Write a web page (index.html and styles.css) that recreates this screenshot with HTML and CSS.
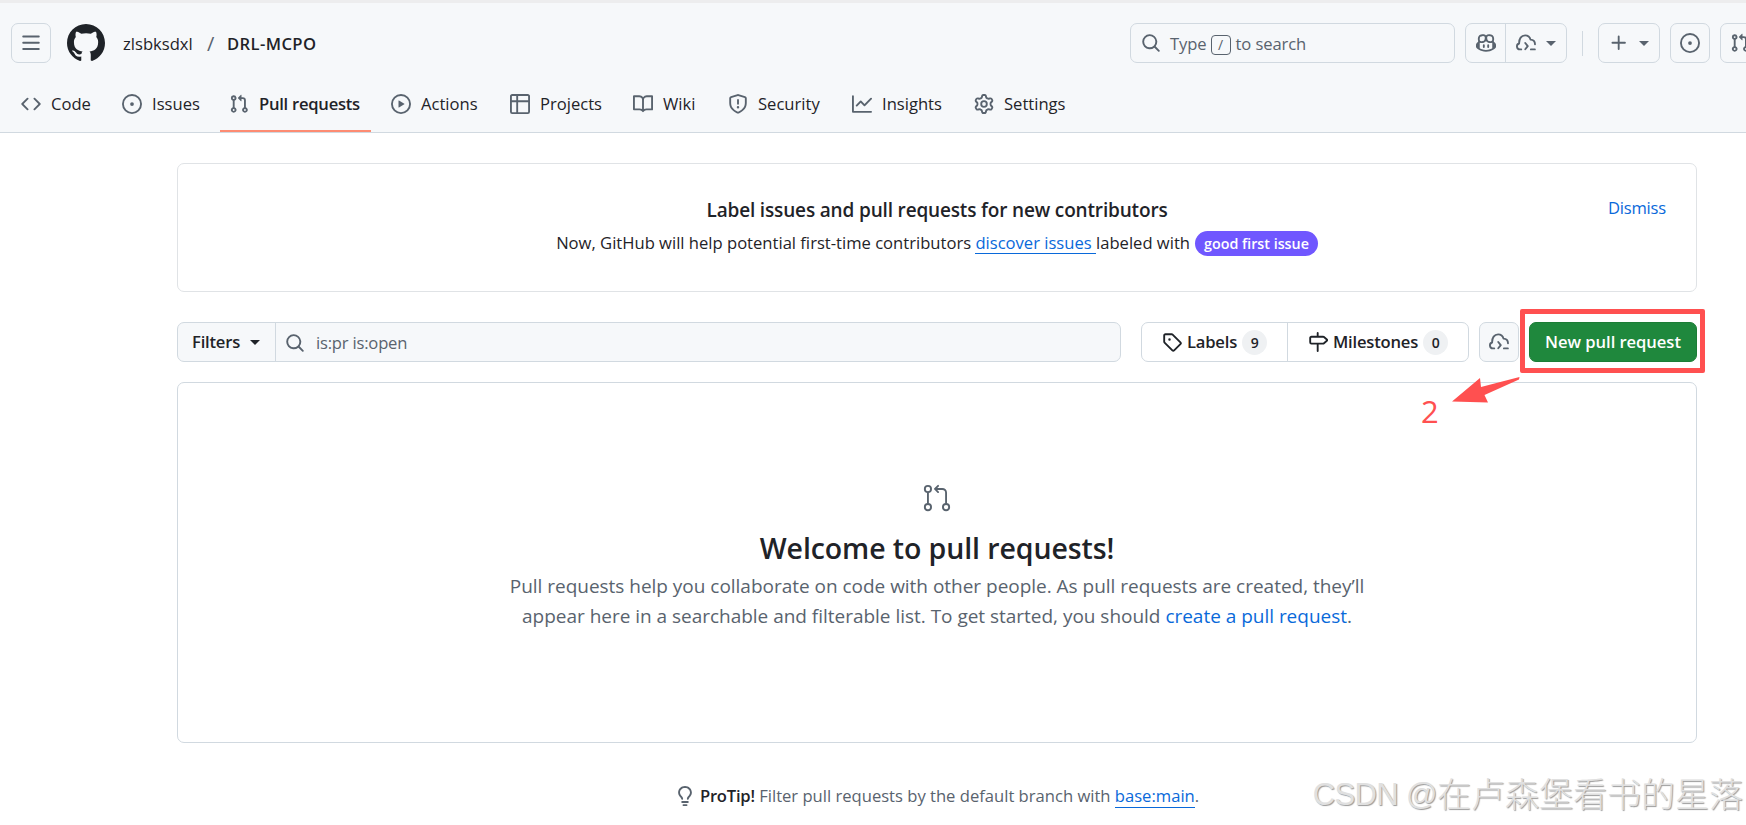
FILE: index.html
```html
<!DOCTYPE html>
<html lang="en">
<head>
  <meta charset="UTF-8" />
  <meta name="viewport" content="width=device-width, initial-scale=1.0"/>
  <title>Pull requests · zlsbksdxl/DRL-MCPO</title>
  <link rel="stylesheet" href="styles.css">
</head>
<body>
  <!-- shared icons -->
  <svg class="sprite" aria-hidden="true">
    <symbol id="i-pr" viewBox="0 0 16 16"><path d="M1.5 3.25a2.25 2.25 0 1 1 3 2.122v5.256a2.251 2.251 0 1 1-1.5 0V5.372A2.25 2.25 0 0 1 1.5 3.25Zm5.677-.177L9.573.677A.25.25 0 0 1 10 .854V2.5h1A2.5 2.5 0 0 1 13.5 5v5.628a2.251 2.251 0 1 1-1.5 0V5a1 1 0 0 0-1-1h-1v1.646a.25.25 0 0 1-.427.177L7.177 3.427a.25.25 0 0 1 0-.354ZM3.75 2.5a.75.75 0 1 0 0 1.5.75.75 0 0 0 0-1.5Zm0 9.5a.75.75 0 1 0 0 1.5.75.75 0 0 0 0-1.5Zm8.25.75a.75.75 0 1 0 1.5 0 .75.75 0 0 0-1.5 0Z"/></symbol>
    <symbol id="i-issue" viewBox="0 0 16 16"><path d="M8 9.5a1.5 1.5 0 1 0 0-3 1.5 1.5 0 0 0 0 3Z"/><path d="M8 0a8 8 0 1 1 0 16A8 8 0 0 1 8 0ZM1.5 8a6.5 6.5 0 1 0 13 0 6.5 6.5 0 0 0-13 0Z"/></symbol>
    <symbol id="i-search" viewBox="0 0 16 16"><path d="M10.68 11.74a6 6 0 0 1-7.922-8.982 6 6 0 0 1 8.982 7.922l3.04 3.04a.749.749 0 0 1-.326 1.275.749.749 0 0 1-.734-.215ZM11.5 7a4.499 4.499 0 1 0-8.997 0A4.499 4.499 0 0 0 11.5 7Z"/></symbol>
    <symbol id="i-cloud" viewBox="0 0 16 16"><path d="M4.2 13.100H3.100a2.400 2.400 0 0 1-.600-4.700C2.400 4.600 4.200 1.900 7.300 1.900c2.300 0 3.800 1.400 4.300 3.400 2.200.100 3.600 1.500 3.600 3.700M7.400 8l2 2.500-2 2.500M11.900 13.100h3.200" fill="none" stroke="currentColor" stroke-width="1.5" stroke-linecap="round" stroke-linejoin="round"/></symbol>
  </svg>

  <header class="header">
    <div class="topbar">
      <div class="icon-btn"><svg class="icon" viewBox="0 0 16 16"><path d="M1 2.75A.75.75 0 0 1 1.75 2h12.5a.75.75 0 0 1 0 1.5H1.75A.75.75 0 0 1 1 2.75Zm0 5A.75.75 0 0 1 1.75 7h12.5a.75.75 0 0 1 0 1.5H1.75A.75.75 0 0 1 1 7.75ZM1.75 12h12.5a.75.75 0 0 1 0 1.5H1.75a.75.75 0 0 1 0-1.5Z"/></svg></div>
      <svg class="logo" viewBox="0 0 16 16"><path d="M8 0c4.42 0 8 3.58 8 8a8.013 8.013 0 0 1-5.45 7.59c-.4.08-.55-.17-.55-.38 0-.27.01-1.13.01-2.2 0-.75-.25-1.23-.54-1.48 1.78-.2 3.65-.88 3.65-3.95 0-.88-.31-1.59-.82-2.15.08-.2.36-1.02-.08-2.12 0 0-.67-.22-2.2.82-.64-.18-1.32-.27-2-.27-.68 0-1.36.09-2 .27-1.53-1.03-2.2-.82-2.2-.82-.44 1.1-.16 1.92-.08 2.12-.51.56-.82 1.28-.82 2.15 0 3.06 1.86 3.75 3.64 3.95-.23.2-.44.55-.51 1.07-.46.21-1.61.55-2.33-.66-.15-.24-.6-.83-1.23-.82-.67.01-.27.38.01.53.34.19.73.9.82 1.13.16.45.68 1.31 2.69.94 0 .67.01 1.3.01 1.49 0 .21-.15.45-.55.38A7.995 7.995 0 0 1 0 8c0-4.42 3.58-8 8-8Z"/></svg>
      <div class="crumbs"><span class="owner">zlsbksdxl</span><span class="slash">/</span><b class="repo">DRL-MCPO</b></div>
      <div class="search"><svg class="icon"><use href="#i-search"/></svg><span>Type</span><kbd>/</kbd><span>to search</span></div>
      <div class="btn-group">
        <div class="copilot"><svg class="icon" viewBox="0 0 16 16"><path d="M7.998 15.035c-4.562 0-7.873-2.914-7.998-3.749V9.338c.085-.628.677-1.686 1.588-2.065.013-.07.024-.143.036-.218.029-.183.06-.384.126-.612-.201-.508-.254-1.084-.254-1.656 0-.87.128-1.769.693-2.484.579-.733 1.494-1.124 2.724-1.261 1.206-.134 2.262.034 2.944.765.05.053.096.108.139.165.044-.057.094-.112.143-.165.682-.731 1.738-.899 2.944-.765 1.23.137 2.145.528 2.724 1.261.566.715.693 1.614.693 2.484 0 .572-.053 1.148-.254 1.656.066.228.098.429.126.612.012.076.024.148.037.218.924.385 1.522 1.471 1.591 2.095v1.872c0 .766-3.351 3.795-8.002 3.795Zm0-1.485c2.28 0 4.584-1.11 5.002-1.433V7.862l-.023-.116c-.49.21-1.075.291-1.727.291-1.146 0-2.059-.327-2.71-.991A3.222 3.222 0 0 1 8 6.303a3.24 3.24 0 0 1-.544.743c-.65.664-1.563.991-2.71.991-.652 0-1.236-.081-1.727-.291l-.023.116v4.255c.419.323 2.722 1.433 5.002 1.433ZM6.762 2.83c-.193-.206-.637-.413-1.682-.297-1.019.113-1.479.404-1.713.7-.247.312-.369.789-.369 1.554 0 .793.129 1.171.308 1.371.162.181.519.379 1.442.379.853 0 1.339-.235 1.638-.54.315-.322.527-.827.617-1.553.117-.935-.037-1.395-.241-1.614Zm4.155-.297c-1.044-.116-1.488.091-1.681.297-.204.219-.359.679-.242 1.614.091.726.303 1.231.618 1.553.299.305.784.54 1.638.54.922 0 1.28-.198 1.442-.379.179-.2.308-.578.308-1.371 0-.765-.123-1.242-.37-1.554-.233-.296-.693-.587-1.713-.7Z"/><path d="M6.25 9.037a.75.75 0 0 1 .75.75v1.501a.75.75 0 0 1-1.5 0V9.787a.75.75 0 0 1 .75-.75Zm4.25.75v1.501a.75.75 0 0 1-1.5 0V9.787a.75.75 0 0 1 1.5 0Z"/></svg></div>
        <div class="agents"><svg class="icon"><use href="#i-cloud"/></svg><i class="caret"></i></div>
      </div>
      <div class="divider"></div>
      <div class="icon-btn create"><svg class="icon" viewBox="0 0 16 16"><path d="M7.75 2a.75.75 0 0 1 .75.75V7h4.25a.75.75 0 0 1 0 1.5H8.5v4.25a.75.75 0 0 1-1.5 0V8.5H2.75a.75.75 0 0 1 0-1.5H7V2.75A.75.75 0 0 1 7.75 2Z"/></svg><i class="caret"></i></div>
      <div class="icon-btn"><svg class="icon"><use href="#i-issue"/></svg></div>
      <div class="icon-btn last"><svg class="icon"><use href="#i-pr"/></svg></div>
    </div>

    <nav class="tabs">
      <a class="tab code"><svg class="icon" viewBox="0 0 16 16"><path d="m11.28 3.22 4.25 4.25a.75.75 0 0 1 0 1.06l-4.25 4.25a.749.749 0 0 1-1.275-.326.749.749 0 0 1 .215-.734L13.94 8l-3.72-3.72a.749.749 0 0 1 .326-1.275.749.749 0 0 1 .734.215Zm-6.56 0a.751.751 0 0 1 1.042.018.751.751 0 0 1 .018 1.042L2.06 8l3.72 3.72a.749.749 0 0 1-.326 1.275.749.749 0 0 1-.734-.215L.47 8.53a.75.75 0 0 1 0-1.06Z"/></svg>Code</a>
      <a class="tab issues"><svg class="icon"><use href="#i-issue"/></svg>Issues</a>
      <a class="tab pulls selected"><svg class="icon"><use href="#i-pr"/></svg>Pull requests</a>
      <a class="tab actions"><svg class="icon" viewBox="0 0 16 16"><path d="M8 0a8 8 0 1 1 0 16A8 8 0 0 1 8 0ZM1.5 8a6.5 6.5 0 1 0 13 0 6.5 6.5 0 0 0-13 0Zm4.879-2.773 4.264 2.559a.25.25 0 0 1 0 .428l-4.264 2.559A.25.25 0 0 1 6 10.559V5.442a.25.25 0 0 1 .379-.215Z"/></svg>Actions</a>
      <a class="tab projects"><svg class="icon" viewBox="0 0 16 16"><path d="M0 1.75C0 .784.784 0 1.75 0h12.5C15.216 0 16 .784 16 1.75v12.5A1.75 1.75 0 0 1 14.25 16H1.75A1.75 1.75 0 0 1 0 14.25ZM6.5 6.5v8h7.75a.25.25 0 0 0 .25-.25V6.5Zm8-1.5V1.75a.25.25 0 0 0-.25-.25H6.5V5Zm-13 1.5v7.75c0 .138.112.25.25.25H5v-8ZM5 5V1.5H1.75a.25.25 0 0 0-.25.25V5Z"/></svg>Projects</a>
      <a class="tab wiki"><svg class="icon" viewBox="0 0 16 16"><path d="M0 1.75A.75.75 0 0 1 .75 1h4.253c1.227 0 2.317.59 3 1.501A3.743 3.743 0 0 1 11.006 1h4.245a.75.75 0 0 1 .75.75v10.5a.75.75 0 0 1-.75.75h-4.507a2.25 2.25 0 0 0-1.591.659l-.622.621a.75.75 0 0 1-1.06 0l-.622-.621A2.25 2.25 0 0 0 5.258 13H.75a.75.75 0 0 1-.75-.75Zm7.251 10.324.004-5.073-.002-2.253A2.25 2.25 0 0 0 5.003 2.5H1.5v9h3.757a3.75 3.75 0 0 1 1.994.574ZM8.755 4.75l-.004 7.322a3.752 3.752 0 0 1 1.992-.572H14.5v-9h-3.495a2.25 2.25 0 0 0-2.25 2.25Z"/></svg>Wiki</a>
      <a class="tab security"><svg class="icon" viewBox="0 0 16 16"><path d="M7.467.133a1.748 1.748 0 0 1 1.066 0l5.25 1.68A1.75 1.75 0 0 1 15 3.48V7c0 1.566-.32 3.182-1.303 4.682-.983 1.498-2.585 2.813-5.032 3.855a1.697 1.697 0 0 1-1.33 0c-2.447-1.042-4.049-2.357-5.032-3.855C1.32 10.182 1 8.566 1 7V3.48a1.75 1.75 0 0 1 1.217-1.667Zm.61 1.429a.25.25 0 0 0-.153 0l-5.25 1.68a.25.25 0 0 0-.174.238V7c0 1.358.275 2.666 1.057 3.86.784 1.194 2.121 2.34 4.366 3.297a.196.196 0 0 0 .154 0c2.245-.956 3.582-2.104 4.366-3.298C13.225 9.666 13.5 8.36 13.5 7V3.48a.251.251 0 0 0-.174-.237l-5.25-1.68ZM8.75 4.75v3a.75.75 0 0 1-1.5 0v-3a.75.75 0 0 1 1.5 0ZM9 10.5a1 1 0 1 1-2 0 1 1 0 0 1 2 0Z"/></svg>Security</a>
      <a class="tab insights"><svg class="icon" viewBox="0 0 16 16"><path d="M1.5 1.75V13.5h13.75a.75.75 0 0 1 0 1.5H.75a.75.75 0 0 1-.75-.75V1.75a.75.75 0 0 1 1.5 0Zm14.28 2.53-5.25 5.25a.75.75 0 0 1-1.06 0L7 7.06 4.28 9.78a.751.751 0 0 1-1.042-.018.751.751 0 0 1-.018-1.042l3.25-3.25a.75.75 0 0 1 1.06 0L10 7.94l4.72-4.72a.751.751 0 0 1 1.042.018.751.751 0 0 1 .018 1.042Z"/></svg>Insights</a>
      <a class="tab settings"><svg class="icon" viewBox="0 0 16 16"><path d="M8 0a8.2 8.2 0 0 1 .701.031C9.444.095 9.99.645 10.16 1.29l.288 1.107c.018.066.079.158.212.224.231.114.454.243.668.386.123.082.233.09.299.071l1.103-.303c.644-.176 1.392.021 1.82.63.27.385.506.792.704 1.218.315.675.111 1.422-.364 1.891l-.814.806c-.049.048-.098.147-.088.294.016.257.016.515 0 .772-.01.147.038.246.088.294l.814.806c.475.469.679 1.216.364 1.891a7.977 7.977 0 0 1-.704 1.217c-.428.61-1.176.807-1.82.63l-1.102-.302c-.067-.019-.177-.011-.3.071a5.909 5.909 0 0 1-.668.386c-.133.066-.194.158-.211.224l-.29 1.106c-.168.646-.715 1.196-1.458 1.26a8.006 8.006 0 0 1-1.402 0c-.743-.064-1.289-.614-1.458-1.26l-.289-1.106c-.018-.066-.079-.158-.212-.224a5.738 5.738 0 0 1-.668-.386c-.123-.082-.233-.09-.299-.071l-1.103.303c-.644.176-1.392-.021-1.82-.63a8.12 8.12 0 0 1-.704-1.218c-.315-.675-.111-1.422.363-1.891l.815-.806c.05-.048.098-.147.088-.294a6.214 6.214 0 0 1 0-.772c.01-.147-.038-.246-.088-.294l-.815-.806C.635 6.045.431 5.298.746 4.623a7.92 7.92 0 0 1 .704-1.217c.428-.61 1.176-.807 1.82-.63l1.102.302c.067.019.177.011.3-.071.214-.143.437-.272.668-.386.133-.066.194-.158.211-.224l.29-1.106C6.009.645 6.556.095 7.299.03 7.53.01 7.764 0 8 0Zm-.571 1.525c-.036.003-.108.036-.137.146l-.289 1.105c-.147.561-.549.967-.998 1.189-.173.086-.34.183-.5.29-.417.278-.97.423-1.529.27l-1.103-.303c-.109-.03-.175.016-.195.045-.22.312-.412.644-.573.99-.014.031-.021.11.059.19l.815.806c.411.406.562.957.53 1.456a4.709 4.709 0 0 0 0 .582c.032.499-.119 1.05-.53 1.456l-.815.806c-.081.08-.073.159-.059.19.162.346.353.677.573.989.02.03.085.076.195.046l1.102-.303c.56-.153 1.113-.008 1.53.27.161.107.328.204.501.29.447.222.85.629.997 1.189l.289 1.105c.029.109.101.143.137.146a6.6 6.6 0 0 0 1.142 0c.036-.003.108-.036.137-.146l.289-1.105c.147-.561.549-.967.998-1.189.173-.086.34-.183.5-.29.417-.278.97-.423 1.529-.27l1.103.303c.109.029.175-.016.195-.045.22-.313.411-.644.573-.99.014-.031.021-.11-.059-.19l-.815-.806c-.411-.406-.562-.957-.53-1.456a4.709 4.709 0 0 0 0-.582c-.032-.499.119-1.05.53-1.456l.815-.806c.081-.08.073-.159.059-.19a6.464 6.464 0 0 0-.573-.989c-.02-.03-.085-.076-.195-.046l-1.102.303c-.56.153-1.113.008-1.53-.27a4.44 4.44 0 0 0-.501-.29c-.447-.222-.85-.629-.997-1.189l-.289-1.105c-.029-.11-.101-.143-.137-.146a6.6 6.6 0 0 0-1.142 0ZM11 8a3 3 0 1 1-6 0 3 3 0 0 1 6 0ZM9.5 8a1.5 1.5 0 1 0-3.001.001A1.5 1.5 0 0 0 9.5 8Z"/></svg>Settings</a>
    </nav>
  </header>

  <main class="container">
    <section class="banner">
      <h4>Label issues and pull requests for new contributors</h4>
      <p>Now, GitHub will help potential first-time contributors <a class="link underlined">discover issues&nbsp;</a><span class="labeled">labeled with</span><span class="pill">good first issue</span></p>
      <a class="link dismiss">Dismiss</a>
    </section>

    <div class="filter-row">
      <div class="filters">
        <div class="filters-btn">Filters<i class="caret"></i></div>
        <div class="query"><svg class="icon"><use href="#i-search"/></svg>is:pr is:open</div>
      </div>
      <div class="subnav">
        <div class="labels"><svg class="icon" viewBox="0 0 16 16"><path d="M1 7.775V2.75C1 1.784 1.784 1 2.75 1h5.025c.464 0 .91.184 1.238.513l6.25 6.25a1.75 1.75 0 0 1 0 2.474l-5.026 5.026a1.75 1.75 0 0 1-2.474 0l-6.25-6.25A1.752 1.752 0 0 1 1 7.775Zm1.5 0c0 .066.026.13.073.177l6.25 6.25a.25.25 0 0 0 .354 0l5.025-5.025a.25.25 0 0 0 0-.354l-6.25-6.25a.25.25 0 0 0-.177-.073H2.75a.25.25 0 0 0-.25.25ZM6 5a1 1 0 1 1 0 2 1 1 0 0 1 0-2Z"/></svg><span>Labels</span><em>9</em></div>
        <div class="milestones"><svg class="icon" viewBox="0 0 16 16"><path d="M7.75 0a.75.75 0 0 1 .75.75V3h3.634c.414 0 .814.147 1.13.414l2.07 1.75a1.75 1.75 0 0 1 0 2.672l-2.07 1.75a1.75 1.75 0 0 1-1.13.414H8.5v5.25a.75.75 0 0 1-1.5 0V10H2.75A1.75 1.75 0 0 1 1 8.25v-3.5C1 3.784 1.784 3 2.75 3H7V.75A.75.75 0 0 1 7.75 0Zm4.384 8.5a.25.25 0 0 0 .161-.06l2.07-1.75a.248.248 0 0 0 0-.38l-2.07-1.75a.25.25 0 0 0-.161-.06H2.75a.25.25 0 0 0-.25.25v3.5c0 .138.112.25.25.25h9.384Z"/></svg><span>Milestones</span><em>0</em></div>
      </div>
      <div class="icon-btn cloud-btn"><svg class="icon"><use href="#i-cloud"/></svg></div>
      <div class="new-pr">New pull request
        <!-- highlight drawn over the button -->
        <div class="mark-box"></div>
        <svg class="mark-arrow" viewBox="0 0 68 28"><path d="M67.500 0 67 2.500 32.500 18 36 25.500 0 24.500 28 1 29 10Z"/></svg>
        <span class="mark-number">2</span>
      </div>
    </div>

    <section class="blankslate">
      <svg class="icon big" viewBox="0 0 24 24"><path d="M16 19.25a3.25 3.25 0 1 1 6.5 0 3.25 3.25 0 0 1-6.5 0Zm-14.5 0a3.25 3.25 0 1 1 6.5 0 3.25 3.25 0 0 1-6.5 0Zm0-14.5a3.25 3.25 0 1 1 6.5 0 3.25 3.25 0 0 1-6.5 0ZM4.75 3a1.75 1.75 0 1 0 .001 3.501A1.75 1.75 0 0 0 4.75 3Zm0 14.5a1.75 1.75 0 1 0 .001 3.501A1.75 1.75 0 0 0 4.75 17.5Zm14.5 0a1.75 1.75 0 1 0 .001 3.501 1.75 1.75 0 0 0-.001-3.501Z"/><path d="M13.405 1.72a.75.75 0 0 1 0 1.06L12.185 4h4.065A3.75 3.75 0 0 1 20 7.75v8.75a.75.75 0 0 1-1.5 0V7.75a2.25 2.25 0 0 0-2.25-2.25h-4.064l1.22 1.22a.75.75 0 0 1-1.061 1.06l-2.5-2.5a.75.75 0 0 1 0-1.06l2.5-2.5a.75.75 0 0 1 1.06 0ZM4.75 7.25A.75.75 0 0 1 5.5 8v8A.75.75 0 0 1 4 16V8a.75.75 0 0 1 .75-.75Z"/></svg>
      <h3>Welcome to pull requests!</h3>
      <p>Pull requests help you collaborate on code with other people. As pull requests are created, they’ll<br>appear here in a searchable and filterable list. To get started, you should <a class="link">create a pull request</a>.</p>
    </section>

    <div class="protip">
      <svg class="icon" viewBox="0 0 16 16"><path d="M8 1.5c-2.363 0-4 1.69-4 3.75 0 .984.424 1.625.984 2.304l.214.253c.223.264.47.556.673.848.284.411.537.896.621 1.49a.75.75 0 0 1-1.484.211c-.04-.282-.163-.547-.37-.847a8.456 8.456 0 0 0-.542-.68c-.084-.1-.173-.205-.268-.32C3.201 7.75 2.5 6.766 2.5 5.25 2.5 2.31 4.863 0 8 0s5.5 2.31 5.5 5.25c0 1.516-.701 2.5-1.328 3.259-.095.115-.184.22-.268.319-.207.245-.383.453-.541.681-.208.3-.33.565-.37.847a.751.751 0 0 1-1.485-.212c.084-.593.337-1.078.621-1.489.203-.292.45-.584.673-.848.075-.088.147-.173.213-.253.561-.679.985-1.32.985-2.304 0-2.06-1.637-3.75-4-3.75ZM5.75 12h4.5a.75.75 0 0 1 0 1.5h-4.5a.75.75 0 0 1 0-1.5ZM6 15.25a.75.75 0 0 1 .75-.75h2.5a.75.75 0 0 1 0 1.5h-2.5a.75.75 0 0 1-.75-.75Z"/></svg>
      <p><b>ProTip!</b> Filter pull requests by the default branch with <a class="link underlined">base:main</a>.</p>
    </div>
  </main>

  <div class="watermark"><span>CSDN @</span>在卢森堡看书的星落</div>
</body>
</html>
```
FILE: styles.css
```css
* {
    box-sizing: border-box;
}
body {
    margin: 0;
    height: 825px;
    overflow: hidden;
    position: relative;
    font-family: "Open Sans", "Noto Sans", "Noto Sans CJK SC", sans-serif;
    font-size: 16.6px;
    line-height: 26px;
    color: #1f2328;
    background-color: #fff;
}
h3, h4, p {
    margin: 0;
}
.sprite {
    display: none;
}
.icon {
    width: 20px;
    height: 20px;
    flex: none;
    fill: currentColor;
}
.caret {
    flex: none;
    border: 5px solid transparent;
    border-top-color: currentColor;
    border-bottom: 0;
}
.link {
    color: #0969da;
}
.underlined {
    border-bottom: 1px solid #0969da;
}

/* header */
.header {
    height: 133px;
    background-color: #f6f8fa;
    border-top: 3px solid #ededee;
    border-bottom: 1px solid #d1d9e0;
    white-space: nowrap;
}
.topbar {
    display: flex;
    align-items: center;
    height: 80px;
    padding-left: 11px;
    color: #59636e;
}
.icon-btn {
    display: flex;
    flex: none;
    align-items: center;
    justify-content: center;
    width: 40px;
    height: 40px;
    border: 1px solid #d1d9e0;
    border-radius: 7px;
    color: #59636e;
}
.logo {
    flex: none;
    width: 38px;
    height: 38px;
    margin-left: 16px;
    fill: #1f2328;
}
.crumbs {
    display: flex;
    flex: none;
    width: 1007px;
    margin-left: 18px;
    padding-top: 1px;
    color: #1f2328;
}
.owner {
    width: 84px;
}
.slash {
    width: 20px;
    font-size: 20px;
    color: #59636e;
}
.repo {
    font-weight: 600;
    letter-spacing: 0.4px;
}
.search {
    display: flex;
    flex: none;
    align-items: center;
    width: 325px;
    height: 40px;
    padding: 1px 0 0 10px;
    border: 1px solid #d1d9e0;
    border-radius: 7px;
    letter-spacing: -0.1px;
}
.search .icon {
    margin: -1px 9px 0 0;
}
.search kbd {
    width: 20px;
    height: 20px;
    margin: 2px 5px 0 4px;
    border: 1px solid #59636e;
    border-radius: 4px;
    font-family: inherit;
    font-size: 14px;
    line-height: 18px;
    text-align: center;
}
.btn-group {
    display: flex;
    flex: none;
    width: 102px;
    height: 40px;
    margin-left: 10px;
    border: 1px solid #d1d9e0;
    border-radius: 7px;
}
.copilot {
    display: flex;
    align-items: center;
    justify-content: center;
    width: 40px;
    border-right: 1px solid #d1d9e0;
}
.agents {
    display: flex;
    flex: 1;
    align-items: center;
    justify-content: center;
    gap: 10px;
}
.divider {
    flex: none;
    width: 1px;
    height: 25px;
    margin: 0 15px;
    background-color: #d1d9e0;
}
.create {
    width: 62px;
    gap: 10px;
    margin-right: 10px;
}
.last {
    margin-left: 10px;
}

/* repo tabs */
.tabs {
    display: flex;
    gap: 10px;
    height: 49px;
    padding-left: 11px;
}
.tab {
    display: flex;
    align-items: center;
    gap: 10px;
    height: 49px;
    padding: 0 10px 8px;
}
.tab .icon {
    color: #59636e;
}
.code {
    width: 91px;
}
.issues {
    width: 98px;
}
.pulls {
    width: 151px;
}
.actions {
    width: 109px;
}
.projects {
    width: 113px;
}
.wiki {
    width: 85px;
}
.security {
    width: 114px;
}
.insights {
    width: 112px;
}
.selected {
    font-weight: 600;
    letter-spacing: -0.25px;
    border-bottom: 2px solid #fd8c73;
    padding: 0 9px 6px;
}

/* content */
.container {
    width: 1520px;
    margin: 30px 0 0 177px;
}
.banner {
    position: relative;
    height: 129px;
    padding-top: 32px;
    border: 1px solid #e0e3e6;
    border-radius: 7px;
    text-align: center;
}
.banner h4 {
    font-size: 19px;
    font-weight: 600;
    line-height: 28px;
    letter-spacing: -0.16px;
}
.banner p {
    display: flex;
    align-items: center;
    justify-content: center;
    margin-top: 6px;
    white-space: pre;
}
.banner .underlined {
    line-height: 21px;
}
.pill {
    height: 25px;
    margin-left: 5px;
    padding: 0 9px;
    border-radius: 13px;
    background-color: #7057ff;
    color: #fff;
    font-size: 14.3px;
    font-weight: 600;
    line-height: 25px;
}
.dismiss {
    position: absolute;
    top: 31px;
    right: 30px;
    letter-spacing: -0.2px;
}
.filter-row {
    display: flex;
    height: 40px;
    margin-top: 30px;
    letter-spacing: -0.2px;
    white-space: nowrap;
}
.filters {
    display: flex;
    width: 944px;
    border: 1px solid #d1d9e0;
    border-radius: 7px;
    background-color: #f6f8fa;
}
.filters-btn {
    display: flex;
    align-items: center;
    gap: 10px;
    width: 98px;
    padding-left: 14px;
    border-right: 1px solid #d1d9e0;
    font-weight: 600;
}
.query {
    display: flex;
    align-items: center;
    gap: 11px;
    padding: 1px 0 0 9px;
    color: #59636e;
}
.subnav {
    display: flex;
    width: 328px;
    margin-left: 20px;
    border: 1px solid #d1d9e0;
    border-radius: 7px;
    font-weight: 600;
}
.labels, .milestones {
    display: flex;
    align-items: center;
    gap: 5px;
    padding-left: 20px;
}
.labels {
    width: 146px;
    border-right: 1px solid #d1d9e0;
}
.subnav em {
    width: 25px;
    height: 25px;
    border-radius: 13px;
    background-color: #eff1f3;
    font-size: 14px;
    font-style: normal;
    line-height: 25px;
    text-align: center;
}
.cloud-btn {
    margin-left: 10px;
    background-color: #f6f8fa;
}
.new-pr {
    position: relative;
    width: 168px;
    margin-left: 10px;
    border: 1px solid #1c7d36;
    border-radius: 7px;
    background-color: #1f883d;
    color: #fff;
    font-weight: 600;
    line-height: 38px;
    letter-spacing: -0.05px;
    text-align: center;
}
.mark-box {
    position: absolute;
    top: -14px;
    left: -10px;
    width: 185px;
    height: 64px;
    border: 5px solid #ff5050;
    border-radius: 2px;
}
.mark-arrow {
    position: absolute;
    top: 54px;
    left: -78px;
    width: 68px;
    height: 28px;
    fill: #ff5050;
}
.mark-number {
    position: absolute;
    top: 69px;
    left: -109px;
    color: #ff5050;
    font-size: 31px;
    font-weight: 400;
}
.blankslate {
    display: flex;
    flex-direction: column;
    align-items: center;
    height: 361px;
    margin-top: 20px;
    padding-top: 100px;
    border: 1px solid #d1d9e0;
    border-radius: 7px;
    white-space: nowrap;
}
.big {
    width: 30px;
    height: 30px;
    color: #59636e;
}
.blankslate h3 {
    margin-top: 13px;
    font-size: 28.5px;
    font-weight: 600;
    line-height: 45px;
    letter-spacing: -0.1px;
}
.blankslate p {
    font-size: 19px;
    line-height: 30px;
    letter-spacing: -0.02px;
    text-align: center;
    color: #59636e;
}
.protip {
    display: flex;
    align-items: center;
    justify-content: center;
    gap: 5px;
    margin-top: 40px;
    color: #59636e;
    white-space: nowrap;
}
.protip b {
    color: #1f2328;
    font-weight: 600;
    letter-spacing: -0.2px;
}

/* overlay in the page corner */
.watermark {
    position: absolute;
    right: 3px;
    bottom: 6px;
    display: flex;
    font-family: "Liberation Sans", "Noto Sans CJK SC", sans-serif;
    font-size: 34px;
    font-weight: 300;
    line-height: 48px;
    color: #e0e0e0;
    text-shadow: 1px 1px 1px #999;
    white-space: nowrap;
}
.watermark span {
    font-size: 31px;
    letter-spacing: -0.6px;
}
```
